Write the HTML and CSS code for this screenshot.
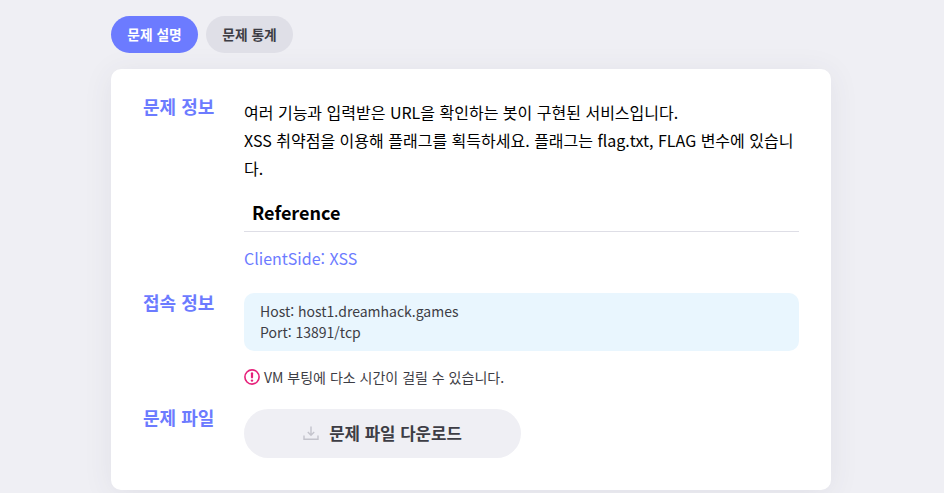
FILE: index.html
```html
<!DOCTYPE html>
<html lang="ko">
<head>
    <meta charset="UTF-8">
    <meta name="viewport" content="width=device-width, initial-scale=1.0">
    <title>문제 설명</title>
    <link rel="stylesheet" href="styles.css">
</head>
<body>
    <div class="container">
        <div class="tabs">
            <button class="tab tab-active">문제 설명</button>
            <button class="tab">문제 통계</button>
        </div>
        <div class="card">
            <div class="row row-info">
                <div class="label">문제 정보</div>
                <div class="content">
                    <p class="desc">여러 기능과 입력받은 URL을 확인하는 봇이 구현된 서비스입니다.<br>XSS 취약점을 이용해 플래그를 획득하세요. 플래그는 flag.txt, FLAG 변수에 있습니다.</p>
                    <h2 class="ref-title">Reference</h2>
                    <a class="ref-link" href="#">ClientSide: XSS</a>
                </div>
            </div>
            <div class="row row-host">
                <div class="label">접속 정보</div>
                <div class="content">
                    <div class="host-box">Host: host1.dreamhack.games<br>Port: 13891/tcp</div>
                    <div class="notice">
                        <svg class="notice-icon" viewBox="0 0 16 16" width="16" height="16">
                            <circle cx="8" cy="8" r="7.1" fill="none" stroke="#e6207a" stroke-width="1.6"/>
                            <rect x="6.9" y="3.2" width="2.2" height="6.2" rx="1.1" fill="#e6207a"/>
                            <circle cx="8" cy="11.6" r="1.2" fill="#e6207a"/>
                        </svg>
                        <span>VM 부팅에 다소 시간이 걸릴 수 있습니다.</span>
                    </div>
                </div>
            </div>
            <div class="row">
                <div class="label">문제 파일</div>
                <div class="content">
                    <button class="download">
                        <svg class="download-icon" viewBox="0 0 16 16" width="16" height="16">
                            <path d="M8 1.5v8.5M4.8 7l3.2 3.2L11.2 7M1 10.5v3.7h14v-3.7" fill="none" stroke="#c4c4cc" stroke-width="1.4"/>
                        </svg>
                        문제 파일 다운로드
                    </button>
                </div>
            </div>
        </div>
    </div>
</body>
</html>
```

FILE: styles.css
```css
html, body {
    height: 100%;
}

body {
    font-family: "Noto Sans CJK KR", "Noto Sans", sans-serif;
    margin: 0;
    background-color: #efeff4;
    overflow: hidden;
}

.container {
    width: 720px;
    margin-left: 111px;
    padding-top: 16px;
}

.tabs {
    display: flex;
    gap: 8px;
    margin-bottom: 16px;
}

.tab {
    font-family: inherit;
    font-size: 13.75px;
    font-weight: 700;
    line-height: 35px;
    height: 37px;
    width: 87px;
    padding: 0 0 1px;
    border: none;
    border-radius: 19px;
    background-color: #dfdfe7;
    color: #3d3d45;
}

.tab-active {
    background-color: #6c7bff;
    color: #fff;
}

.card {
    background-color: #fff;
    border-radius: 10px;
    padding: 28px 32px 32px;
    height: 421px;
    box-sizing: border-box;
    box-shadow: 0 4px 30px rgba(60, 60, 90, 0.08);
}

.row {
    display: flex;
}

.row-info {
    margin-bottom: 21px;
}

.row-host {
    margin-bottom: 21px;
}

.label {
    width: 101px;
    flex-shrink: 0;
    margin-top: -1px;
    color: #6c7bff;
    font-size: 18px;
    font-weight: 700;
    line-height: 20px;
}

.content {
    flex: 1;
    min-width: 0;
}

.desc {
    margin: 1px 0 0;
    font-size: 16px;
    line-height: 28px;
    color: #000;
    word-break: break-all;
}

.ref-title {
    margin: 16px 0 0;
    padding: 0 0 5px 8px;
    font-size: 18px;
    font-weight: 700;
    line-height: 28px;
    color: #000;
    border-bottom: 1px solid #dedee6;
}

.ref-link {
    display: block;
    margin-top: 12px;
    font-size: 16px;
    line-height: 28px;
    color: #6c7bff;
    text-decoration: none;
}

.host-box {
    background-color: #e9f6fe;
    border-radius: 10px;
    padding: 8px 16px;
    font-size: 14px;
    line-height: 21px;
    color: #3d3d45;
}

.notice {
    display: flex;
    align-items: center;
    gap: 4px;
    margin-top: 16px;
    font-size: 14px;
    line-height: 20px;
    color: #3d3d45;
}

.download {
    display: flex;
    align-items: center;
    justify-content: center;
    gap: 10px;
    width: 277px;
    height: 49px;
    margin-top: 1px;
    padding: 0 0 2px;
    border: none;
    border-radius: 25px;
    background-color: #efeff4;
    color: #3d3d45;
    font-family: inherit;
    font-size: 16.75px;
    font-weight: 700;
}
```
